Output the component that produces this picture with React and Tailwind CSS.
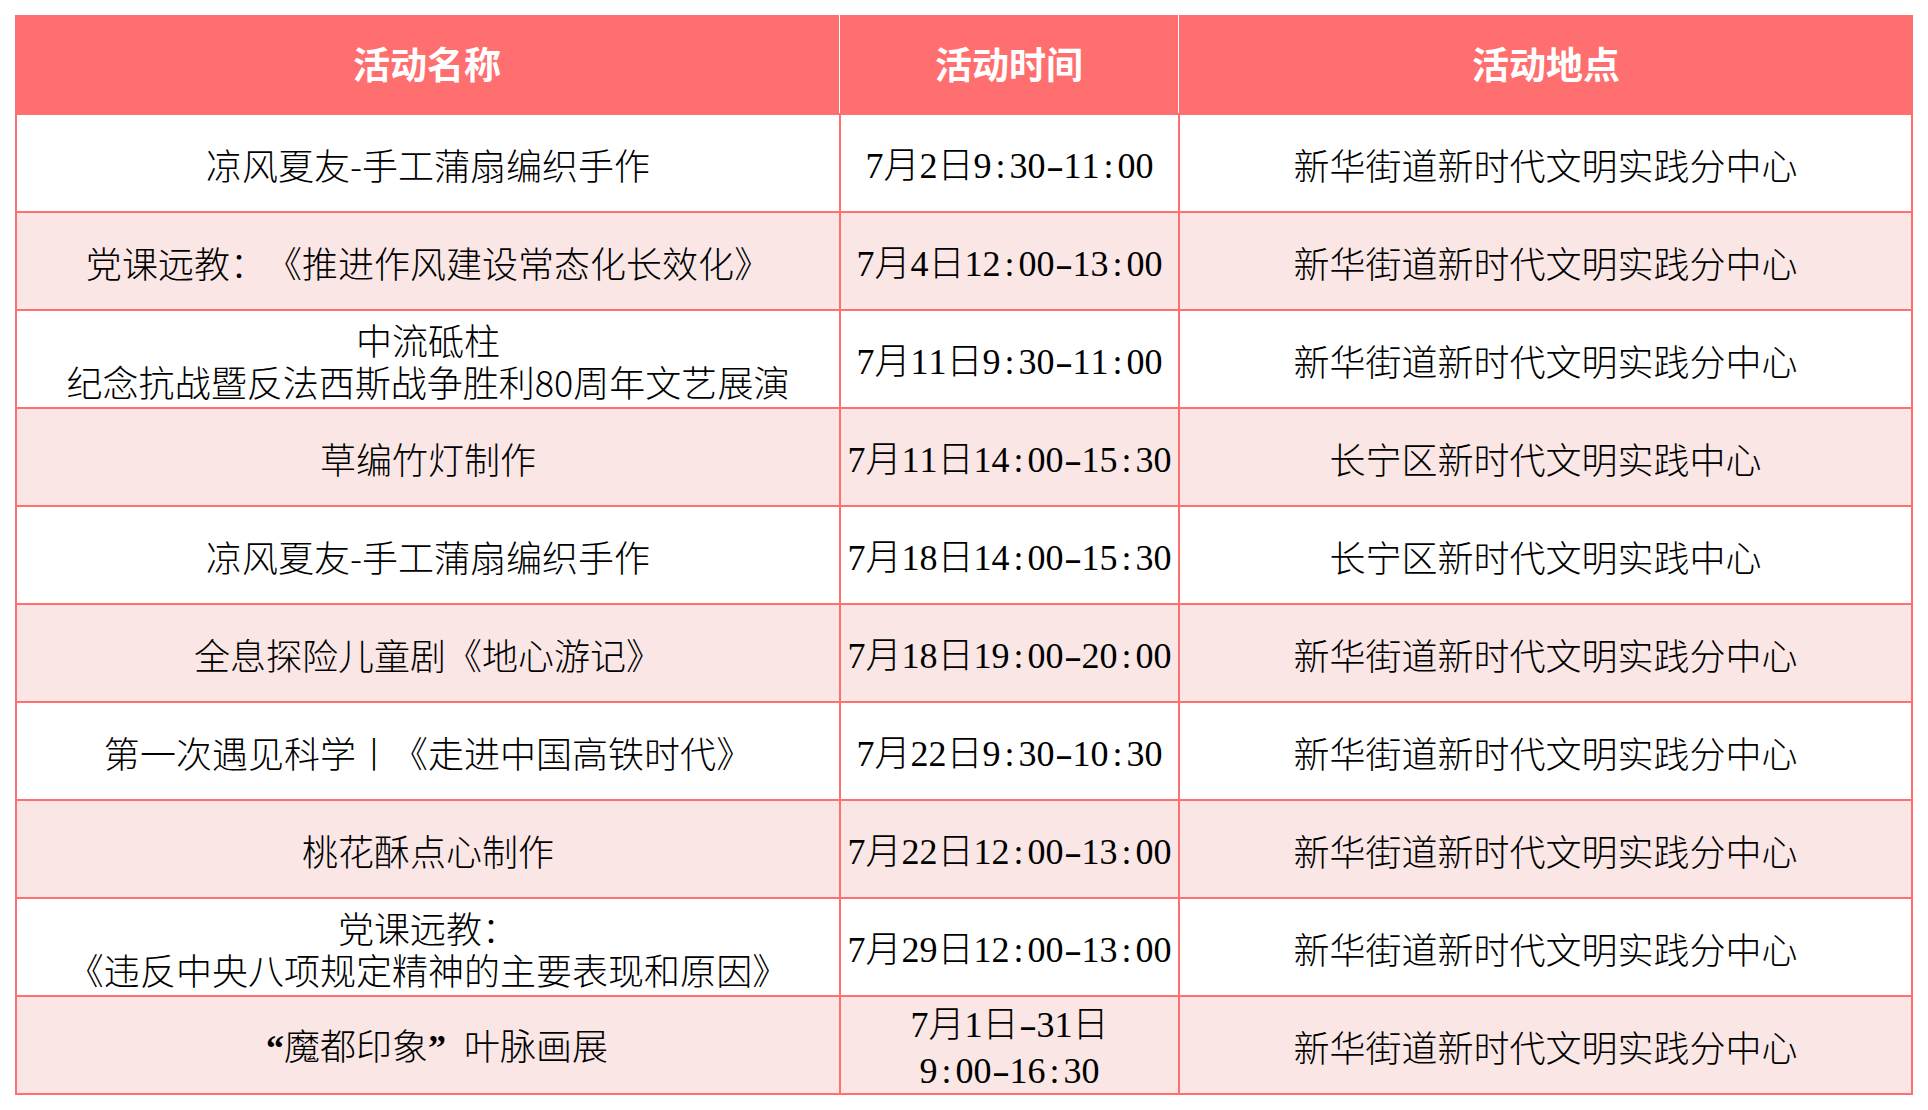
import React from "react";

const rows = [
  { name: ["凉风夏友-手工蒲扇编织手作"], time: ["7月2日9:30-11:00"], place: "新华街道新时代文明实践分中心" },
  { name: ["党课远教：《推进作风建设常态化长效化》"], time: ["7月4日12:00-13:00"], place: "新华街道新时代文明实践分中心" },
  { name: ["中流砥柱", "纪念抗战暨反法西斯战争胜利80周年文艺展演"], time: ["7月11日9:30-11:00"], place: "新华街道新时代文明实践分中心" },
  { name: ["草编竹灯制作"], time: ["7月11日14:00-15:30"], place: "长宁区新时代文明实践中心" },
  { name: ["凉风夏友-手工蒲扇编织手作"], time: ["7月18日14:00-15:30"], place: "长宁区新时代文明实践中心" },
  { name: ["全息探险儿童剧《地心游记》"], time: ["7月18日19:00-20:00"], place: "新华街道新时代文明实践分中心" },
  { name: ["第一次遇见科学丨《走进中国高铁时代》"], time: ["7月22日9:30-10:30"], place: "新华街道新时代文明实践分中心" },
  { name: ["桃花酥点心制作"], time: ["7月22日12:00-13:00"], place: "新华街道新时代文明实践分中心" },
  { name: ["党课远教：", "《违反中央八项规定精神的主要表现和原因》"], time: ["7月29日12:00-13:00"], place: "新华街道新时代文明实践分中心" },
  { name: ["“魔都印象”叶脉画展"], time: ["7月1日-31日", "9:00-16:30"], place: "新华街道新时代文明实践分中心" },
];

function NameLine({ text }) {
  return (
    <span className="whitespace-nowrap">
      {[...text].map((ch, i) => {
        if (ch === "“")
          return (
            <span key={i} className="inline-block w-[1em] text-right font-['Liberation_Serif',serif] font-bold">
              {ch}
            </span>
          );
        if (ch === "”")
          return (
            <span key={i} className="inline-block w-[1em] text-left font-['Liberation_Serif',serif] font-bold">
              {ch}
            </span>
          );
        if (ch === "：")
          return (
            <span key={i} className="inline-block w-[1em] text-left">
              {ch}
            </span>
          );
        return <span key={i}>{ch}</span>;
      })}
    </span>
  );
}

function TimeLine({ text }) {
  return (
    <span className="whitespace-nowrap">
      {[...text].map((ch, i) => {
        const ascii = ch.charCodeAt(0) < 128;
        if (!ascii) return <span key={i}>{ch}</span>;
        if (ch === "-")
          return (
            <span key={i} className="inline-block w-[0.5em] text-center font-['Liberation_Serif',serif] scale-x-150">
              {ch}
            </span>
          );
        return (
          <span key={i} className="inline-block w-[0.5em] text-center font-['Liberation_Serif',serif]">
            {ch}
          </span>
        );
      })}
    </span>
  );
}

export default function App() {
  return (
    <div className="min-h-screen bg-white pt-[15px] pl-[15px] font-['Noto_Sans_CJK_SC','Noto_Sans',sans-serif] [text-spacing-trim:space-all]">
      <div className="w-[1898px]">
        <div className="grid h-[98px] grid-cols-[824px_339px_735px] bg-[#ff6f6f] text-[37px] font-bold text-white">
          <div className="flex items-center justify-center">活动名称</div>
          <div className="flex items-center justify-center border-l border-white">活动时间</div>
          <div className="flex items-center justify-center border-l border-white">活动地点</div>
        </div>
        <div className="border-x-2 border-b-2 border-[#ff6f6f] text-[36px] font-light text-black">
          {rows.map((r, idx) => (
            <div
              key={idx}
              className={
                idx % 2 === 1
                  ? "grid h-[98px] grid-cols-[822px_339px_733px] border-t-2 border-[#ff6f6f] bg-[#f9e6e5]"
                  : "grid h-[98px] grid-cols-[822px_339px_733px] border-t-2 border-[#ff6f6f] bg-white"
              }
            >
              <div className="flex flex-col items-center justify-center pt-[1px] leading-[42px]">
                {r.name.map((l, i) => (
                  <NameLine key={i} text={l} />
                ))}
              </div>
              <div className="flex flex-col items-center justify-center border-l-2 border-[#ff6f6f] pt-[1px] leading-[42px]">
                {r.time.map((l, i) => (
                  <TimeLine key={i} text={l} />
                ))}
              </div>
              <div className="flex items-center justify-center border-l-2 border-[#ff6f6f] pt-[1px] leading-[42px]">
                {r.place}
              </div>
            </div>
          ))}
        </div>
      </div>
    </div>
  );
}
